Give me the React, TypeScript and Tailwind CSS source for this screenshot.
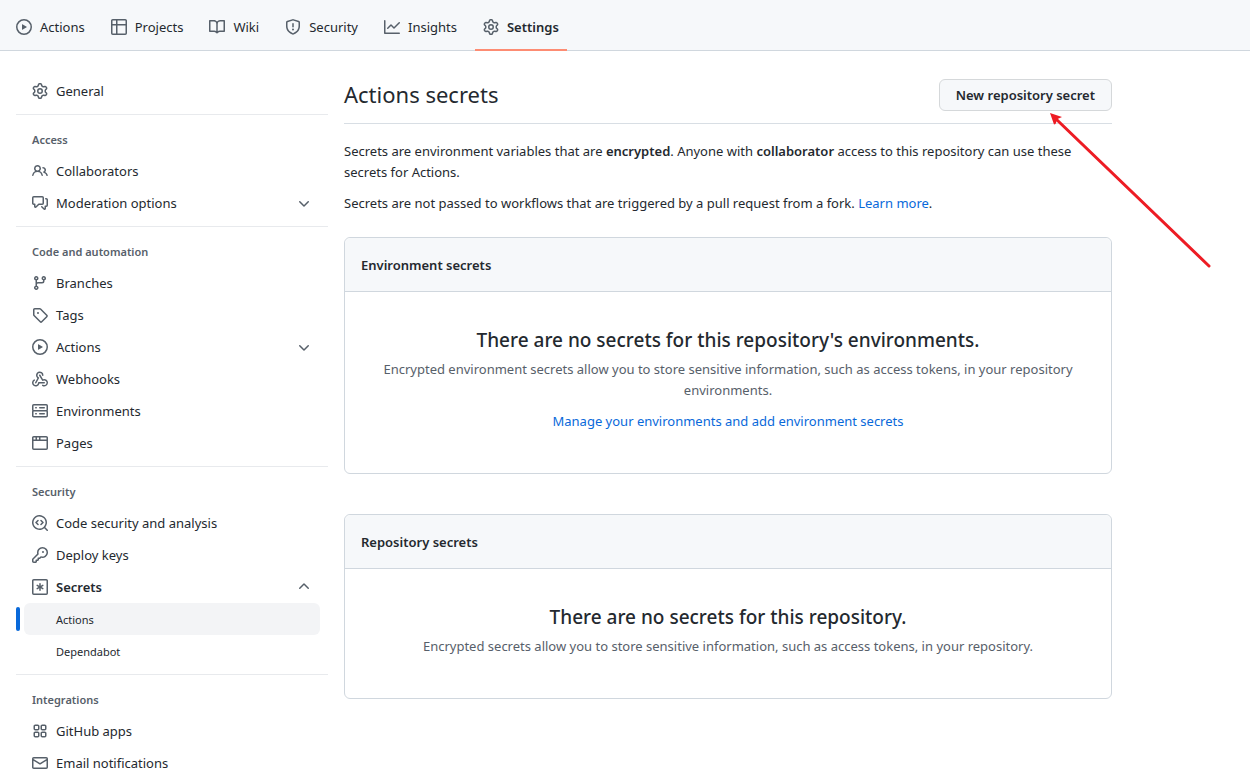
import React from "react";
import clsx from "clsx";

const icons = {
  play: "M1.5 8a6.5 6.5 0 1113 0 6.5 6.5 0 01-13 0zM8 0a8 8 0 100 16A8 8 0 008 0zM6.379 5.227A.25.25 0 006 5.442v5.117a.25.25 0 00.379.214l4.264-2.559a.25.25 0 000-.428L6.379 5.227z",
  table:
    "M0 1.75C0 .784.784 0 1.75 0h12.5C15.216 0 16 .784 16 1.75v12.5A1.75 1.75 0 0114.25 16H1.75A1.75 1.75 0 010 14.25V1.75zM1.5 6.5v7.75c0 .138.112.25.25.25H5v-8H1.5zM5 5H1.5V1.75a.25.25 0 01.25-.25H5V5zm1.5 1.5v8h7.75a.25.25 0 00.25-.25V6.5h-8zm8-1.5h-8V1.5h7.75a.25.25 0 01.25.25V5z",
  book: "M0 1.75A.75.75 0 01.75 1h4.253c1.227 0 2.317.59 3 1.501A3.744 3.744 0 0111.006 1h4.245a.75.75 0 01.75.75v10.5a.75.75 0 01-.75.75h-4.507a2.25 2.25 0 00-1.591.659l-.622.621a.75.75 0 01-1.06 0l-.622-.621A2.25 2.25 0 005.258 13H.75a.75.75 0 01-.75-.75V1.75zm8.755 3a2.25 2.25 0 012.25-2.25H14.5v9h-3.757c-.71 0-1.4.201-1.992.572l.004-7.322zm-1.504 7.324l.004-5.073-.002-2.253A2.25 2.25 0 005.003 2.5H1.5v9h3.757a3.75 3.75 0 011.994.574z",
  shield:
    "M7.467.133a1.75 1.75 0 011.066 0l5.25 1.68A1.75 1.75 0 0115 3.48V7c0 1.566-.32 3.182-1.303 4.682-.983 1.498-2.585 2.813-5.032 3.855a1.7 1.7 0 01-1.33 0c-2.447-1.042-4.049-2.357-5.032-3.855C1.32 10.182 1 8.566 1 7V3.48a1.75 1.75 0 011.217-1.667l5.25-1.68zm.61 1.429a.25.25 0 00-.153 0l-5.25 1.68a.25.25 0 00-.174.238V7c0 1.358.275 2.666 1.057 3.86.784 1.194 2.121 2.34 4.366 3.297a.2.2 0 00.154 0c2.245-.956 3.582-2.104 4.366-3.298C13.225 9.666 13.5 8.36 13.5 7V3.48a.25.25 0 00-.174-.237l-5.25-1.68zM9 10.5a1 1 0 11-2 0 1 1 0 012 0zM8.75 4.75a.75.75 0 00-1.5 0v3a.75.75 0 001.5 0v-3z",
  graph:
    "M1.5 1.75a.75.75 0 00-1.5 0v12.5c0 .414.336.75.75.75h14.5a.75.75 0 000-1.5H1.5V1.75zm14.28 2.53a.75.75 0 00-1.06-1.06L10 7.94 7.53 5.47a.75.75 0 00-1.06 0L3.22 8.72a.75.75 0 001.06 1.06L7 7.06l2.47 2.47a.75.75 0 001.06 0l5.25-5.25z",
  gear: "M7.429 1.525a6.593 6.593 0 011.142 0c.036.003.108.036.137.146l.289 1.105c.147.56.55.967.997 1.189.174.086.341.183.501.29.417.278.97.423 1.53.27l1.102-.303c.11-.03.175.016.195.046.219.31.41.641.573.989.014.031.022.11-.059.19l-.815.806c-.411.406-.562.957-.53 1.456a4.588 4.588 0 010 .582c-.032.499.119 1.05.53 1.456l.815.806c.08.08.073.159.059.19a6.494 6.494 0 01-.573.99c-.02.029-.086.074-.195.045l-1.103-.303c-.559-.153-1.112-.008-1.529.27-.16.107-.327.204-.5.29-.449.222-.851.628-.998 1.189l-.289 1.105c-.029.11-.101.143-.137.146a6.613 6.613 0 01-1.142 0c-.036-.003-.108-.037-.137-.146l-.289-1.105c-.147-.56-.55-.967-.997-1.189a4.502 4.502 0 01-.501-.29c-.417-.278-.97-.423-1.53-.27l-1.102.303c-.11.03-.175-.016-.195-.046a6.492 6.492 0 01-.573-.989c-.014-.031-.022-.11.059-.19l.815-.806c.411-.406.562-.957.53-1.456a4.587 4.587 0 010-.582c.032-.499-.119-1.05-.53-1.456l-.815-.806c-.08-.08-.073-.159-.059-.19a6.44 6.44 0 01.573-.99c.02-.029.086-.075.195-.045l1.103.303c.559.153 1.112.008 1.529-.27.16-.107.327-.204.5-.29.449-.222.851-.628.998-1.189l.289-1.105c.029-.11.101-.143.137-.146zM8 0c-.236 0-.47.01-.701.03-.743.065-1.29.615-1.458 1.261l-.29 1.106c-.017.066-.078.158-.211.224a5.994 5.994 0 00-.668.386c-.123.082-.233.09-.3.071L3.27 2.776c-.644-.177-1.392.02-1.82.63a7.977 7.977 0 00-.704 1.217c-.315.675-.111 1.422.363 1.891l.815.806c.05.048.098.147.088.294a6.084 6.084 0 000 .772c.01.147-.038.246-.088.294l-.815.806c-.474.469-.678 1.216-.363 1.891.2.428.436.835.704 1.218.428.609 1.176.806 1.82.63l1.103-.303c.066-.019.176-.011.299.071.213.143.436.272.668.386.133.066.194.158.212.224l.289 1.106c.169.646.715 1.196 1.458 1.26a8.094 8.094 0 001.402 0c.743-.064 1.29-.614 1.458-1.26l.29-1.106c.017-.066.078-.158.211-.224a5.98 5.98 0 00.668-.386c.123-.082.233-.09.3-.071l1.102.302c.644.177 1.392-.02 1.82-.63.268-.382.505-.789.704-1.217.315-.675.111-1.422-.364-1.891l-.814-.806c-.05-.048-.098-.147-.088-.294a6.1 6.1 0 000-.772c-.01-.147.039-.246.088-.294l.814-.806c.475-.469.679-1.216.364-1.891a7.992 7.992 0 00-.704-1.218c-.428-.609-1.176-.806-1.82-.63l-1.103.303c-.066.019-.176.011-.299-.071a5.991 5.991 0 00-.668-.386c-.133-.066-.194-.158-.212-.224L10.16 1.29C9.99.645 9.444.095 8.701.031A8.094 8.094 0 008 0zm1.5 8a1.5 1.5 0 11-3 0 1.5 1.5 0 013 0zM11 8a3 3 0 11-6 0 3 3 0 016 0z",
  people:
    "M5.5 3.5a2 2 0 100 4 2 2 0 000-4zM2 5.5a3.5 3.5 0 115.898 2.549 5.507 5.507 0 013.034 4.084.75.75 0 11-1.482.235 4.001 4.001 0 00-7.9 0 .75.75 0 01-1.482-.236A5.507 5.507 0 013.102 8.05 3.49 3.49 0 012 5.5zM11 4a.75.75 0 100 1.5 1.5 1.5 0 01.666 2.844.75.75 0 00-.416.672v.352a.75.75 0 00.574.73c1.2.289 2.162 1.2 2.522 2.372a.75.75 0 101.434-.44 5.01 5.01 0 00-2.56-3.012A3 3 0 0011 4z",
  discussion:
    "M1.5 2.75a.25.25 0 01.25-.25h8.5a.25.25 0 01.25.25v5.5a.25.25 0 01-.25.25h-3.5a.75.75 0 00-.53.22L3.5 11.44V9.25a.75.75 0 00-.75-.75h-1a.25.25 0 01-.25-.25v-5.5zM1.75 1A1.75 1.75 0 000 2.75v5.5C0 9.216.784 10 1.75 10H2v1.543a1.457 1.457 0 002.487 1.03L7.061 10h3.189A1.75 1.75 0 0012 8.25v-5.5A1.75 1.75 0 0010.25 1h-8.5zM14.5 4.75a.25.25 0 00-.25-.25h-.5a.75.75 0 110-1.5h.5c.966 0 1.75.784 1.75 1.75v5.5A1.75 1.75 0 0114.25 12H14v1.543a1.457 1.457 0 01-2.487 1.03L9.22 12.28a.75.75 0 111.06-1.06l2.22 2.22v-2.19a.75.75 0 01.75-.75h1a.25.25 0 00.25-.25v-5.5z",
  branch:
    "M11.75 2.5a.75.75 0 100 1.5.75.75 0 000-1.5zm-2.25.75a2.25 2.25 0 113 2.122V6A2.5 2.5 0 0110 8.5H6a1 1 0 00-1 1v1.128a2.251 2.251 0 11-1.5 0V5.372a2.25 2.25 0 111.5 0v1.836A2.492 2.492 0 016 7h4a1 1 0 001-1v-.628A2.25 2.25 0 019.5 3.25zM4.25 12a.75.75 0 100 1.5.75.75 0 000-1.5zM3.5 3.25a.75.75 0 111.5 0 .75.75 0 01-1.5 0z",
  tag: "M2.5 7.775V2.75a.25.25 0 01.25-.25h5.025a.25.25 0 01.177.073l6.25 6.25a.25.25 0 010 .354l-5.025 5.025a.25.25 0 01-.354 0l-6.25-6.25a.25.25 0 01-.073-.177zm-1.5 0V2.75C1 1.784 1.784 1 2.75 1h5.025c.464 0 .91.184 1.238.513l6.25 6.25a1.75 1.75 0 010 2.474l-5.026 5.026a1.75 1.75 0 01-2.474 0l-6.25-6.25A1.75 1.75 0 011 7.775zM6 5a1 1 0 100 2 1 1 0 000-2z",
  webhook:
    "M5.5 4.25a2.25 2.25 0 014.5 0 .75.75 0 001.5 0 3.75 3.75 0 10-6.14 2.889l-2.272 4.258a.75.75 0 001.324.706L7 7.25a.75.75 0 00-.309-1.015A2.25 2.25 0 015.5 4.25zM7.364 3.607a.75.75 0 011.03.257l2.608 4.349a3.75 3.75 0 11-.628 6.785.75.75 0 01.752-1.299 2.25 2.25 0 10-.033-3.88.75.75 0 01-1.03-.256L7.107 4.636a.75.75 0 01.257-1.03zM2.9 8.776A.75.75 0 012.625 9.8 2.25 2.25 0 106 11.75a.75.75 0 01.75-.751h5.5a.75.75 0 010 1.5H7.425a3.751 3.751 0 11-5.55-3.998.75.75 0 011.024.274z",
  server:
    "M1.75 1A1.75 1.75 0 000 2.75v4c0 .372.116.717.314 1a1.742 1.742 0 00-.314 1v4c0 .966.784 1.75 1.75 1.75h12.5A1.75 1.75 0 0016 12.75v-4c0-.372-.116-.717-.314-1 .198-.283.314-.628.314-1v-4A1.75 1.75 0 0014.25 1H1.75zm0 7.5a.25.25 0 00-.25.25v4c0 .138.112.25.25.25h12.5a.25.25 0 00.25-.25v-4a.25.25 0 00-.25-.25H1.75zM1.5 2.75a.25.25 0 01.25-.25h12.5a.25.25 0 01.25.25v4a.25.25 0 01-.25.25H1.75a.25.25 0 01-.25-.25v-4zm5.5 2A.75.75 0 017.75 4h4.5a.75.75 0 010 1.5h-4.5A.75.75 0 017 4.75zM7.75 10a.75.75 0 000 1.5h4.5a.75.75 0 000-1.5h-4.5zM3 4.75A.75.75 0 013.75 4h.5a.75.75 0 010 1.5h-.5A.75.75 0 013 4.75zM3.75 10a.75.75 0 000 1.5h.5a.75.75 0 000-1.5h-.5z",
  browser:
    "M0 2.75C0 1.784.784 1 1.75 1h12.5c.966 0 1.75.784 1.75 1.75v10.5A1.75 1.75 0 0114.25 15H1.75A1.75 1.75 0 010 13.25V2.75zm1.75-.25a.25.25 0 00-.25.25V4.5h2v-2H1.75zM5 2.5v2h2v-2H5zm3.5 0v2h6V2.75a.25.25 0 00-.25-.25H8.5zm6 3.5h-13v7.25c0 .138.112.25.25.25h12.5a.25.25 0 00.25-.25V6z",
  codescan:
    "M8.47 4.97a.75.75 0 000 1.06L9.94 7.5 8.47 8.97a.75.75 0 101.06 1.06l2-2a.75.75 0 000-1.06l-2-2a.75.75 0 00-1.06 0zM6.53 6.03a.75.75 0 00-1.06-1.06l-2 2a.75.75 0 000 1.06l2 2a.75.75 0 101.06-1.06L5.06 7.5l1.47-1.47zM12.246 13.307a7.5 7.5 0 111.06-1.06l2.474 2.473a.75.75 0 11-1.06 1.06l-2.474-2.473zM1.5 7.5a6 6 0 1110.386 4.094.75.75 0 00-.292.293A6 6 0 011.5 7.5z",
  key: "M6.5 5.5a4 4 0 112.731 3.795.75.75 0 00-.768.18L7.44 10.5H6.25a.75.75 0 00-.75.75v1.19l-.06.06H4.25a.75.75 0 00-.75.75v1.19l-.06.06H1.75a.25.25 0 01-.25-.25v-1.69l5.024-5.023a.75.75 0 00.181-.768A3.995 3.995 0 016.5 5.5zm4-5.5a5.5 5.5 0 00-5.348 6.788L.22 11.72a.75.75 0 00-.22.53v2C0 15.216.784 16 1.75 16h2a.75.75 0 00.53-.22l.5-.5a.75.75 0 00.22-.53V14h.75a.75.75 0 00.53-.22l.5-.5a.75.75 0 00.22-.53V12h.75a.75.75 0 00.53-.22l.932-.932A5.5 5.5 0 1010.5 0zm.5 6a1 1 0 100-2 1 1 0 000 2z",
  asterisk:
    "M0 1.75C0 .784.784 0 1.75 0h12.5C15.216 0 16 .784 16 1.75v12.5A1.75 1.75 0 0114.25 16H1.75A1.75 1.75 0 010 14.25V1.75zm1.75-.25a.25.25 0 00-.25.25v12.5c0 .138.112.25.25.25h12.5a.25.25 0 00.25-.25V1.75a.25.25 0 00-.25-.25H1.75zM8 4a.75.75 0 01.75.75V6.7l1.69-.975a.75.75 0 01.75 1.3L9.5 8l1.69.976a.75.75 0 01-.75 1.298L8.75 9.3v1.951a.75.75 0 01-1.5 0V9.299l-1.69.975a.75.75 0 01-.75-1.298L6.5 8l-1.69-.975a.75.75 0 01.75-1.3l1.69.976V4.75A.75.75 0 018 4z",
  apps: "M1.5 3.25c0-.966.784-1.75 1.75-1.75h2.5c.966 0 1.75.784 1.75 1.75v2.5A1.75 1.75 0 015.75 7.5h-2.5A1.75 1.75 0 011.5 5.75v-2.5zM3.25 3a.25.25 0 00-.25.25v2.5c0 .138.112.25.25.25h2.5A.25.25 0 006 5.75v-2.5A.25.25 0 005.75 3h-2.5zM1.5 10.25c0-.966.784-1.75 1.75-1.75h2.5c.966 0 1.75.784 1.75 1.75v2.5a1.75 1.75 0 01-1.75 1.75h-2.5a1.75 1.75 0 01-1.75-1.75v-2.5zM3.25 10a.25.25 0 00-.25.25v2.5c0 .138.112.25.25.25h2.5a.25.25 0 00.25-.25v-2.5a.25.25 0 00-.25-.25h-2.5zM8.5 3.25c0-.966.784-1.75 1.75-1.75h2.5c.966 0 1.75.784 1.75 1.75v2.5a1.75 1.75 0 01-1.75 1.75h-2.5A1.75 1.75 0 018.5 5.75v-2.5zM10.25 3a.25.25 0 00-.25.25v2.5c0 .138.112.25.25.25h2.5a.25.25 0 00.25-.25v-2.5a.25.25 0 00-.25-.25h-2.5zM8.5 10.25c0-.966.784-1.75 1.75-1.75h2.5c.966 0 1.75.784 1.75 1.75v2.5a1.75 1.75 0 01-1.75 1.75h-2.5a1.75 1.75 0 01-1.75-1.75v-2.5zM10.25 10a.25.25 0 00-.25.25v2.5c0 .138.112.25.25.25h2.5a.25.25 0 00.25-.25v-2.5a.25.25 0 00-.25-.25h-2.5z",
  mail: "M1.75 2A1.75 1.75 0 000 3.75v8.5C0 13.216.784 14 1.75 14h12.5A1.75 1.75 0 0016 12.25v-8.5A1.75 1.75 0 0014.25 2H1.75zM14.5 4.07v-.32a.25.25 0 00-.25-.25H1.75a.25.25 0 00-.25.25v.32L8 7.88l6.5-3.81zm-13 1.74v6.441c0 .138.112.25.25.25h12.5a.25.25 0 00.25-.25V5.809L8.38 9.397a.75.75 0 01-.76 0L1.5 5.809z",
  down: "M12.78 6.22a.75.75 0 010 1.06l-4.25 4.25a.75.75 0 01-1.06 0L3.22 7.28a.75.75 0 011.06-1.06L8 9.94l3.72-3.72a.75.75 0 011.06 0z",
  up: "M3.22 9.78a.75.75 0 010-1.06l4.25-4.25a.75.75 0 011.06 0l4.25 4.25a.75.75 0 01-1.06 1.06L8 6.06 4.28 9.78a.75.75 0 01-1.06 0z",
};

type IconName = keyof typeof icons;

const Icon = ({ name }: { name: IconName }) => (
  <svg
    viewBox="0 0 16 16"
    className="h-4 w-4 shrink-0 fill-[#57606a]"
    aria-hidden="true"
  >
    <path fillRule="evenodd" clipRule="evenodd" d={icons[name]} />
  </svg>
);

const tabs: { icon: IconName; label: string; active?: boolean }[] = [
  { icon: "play", label: "Actions" },
  { icon: "table", label: "Projects" },
  { icon: "book", label: "Wiki" },
  { icon: "shield", label: "Security" },
  { icon: "graph", label: "Insights" },
  { icon: "gear", label: "Settings", active: true },
];

type Item = {
  icon: IconName;
  label: string;
  expandable?: boolean;
  children?: { label: string; active?: boolean }[];
};

const sections: { title?: string; items: Item[] }[] = [
  { items: [{ icon: "gear", label: "General" }] },
  {
    title: "Access",
    items: [
      { icon: "people", label: "Collaborators" },
      { icon: "discussion", label: "Moderation options", expandable: true },
    ],
  },
  {
    title: "Code and automation",
    items: [
      { icon: "branch", label: "Branches" },
      { icon: "tag", label: "Tags" },
      { icon: "play", label: "Actions", expandable: true },
      { icon: "webhook", label: "Webhooks" },
      { icon: "server", label: "Environments" },
      { icon: "browser", label: "Pages" },
    ],
  },
  {
    title: "Security",
    items: [
      { icon: "codescan", label: "Code security and analysis" },
      { icon: "key", label: "Deploy keys" },
      {
        icon: "asterisk",
        label: "Secrets",
        children: [{ label: "Actions", active: true }, { label: "Dependabot" }],
      },
    ],
  },
  {
    title: "Integrations",
    items: [
      { icon: "apps", label: "GitHub apps" },
      { icon: "mail", label: "Email notifications" },
    ],
  },
];

const SidebarItem = ({ item }: { item: Item }) => {
  const rowClass = "flex h-8 w-full items-center gap-2 px-4 text-left";

  if (!item.expandable && !item.children) {
    return (
      <li>
        <a href="#" className={rowClass}>
          <Icon name={item.icon} />
          {item.label}
        </a>
      </li>
    );
  }

  return (
    <li>
      <button
        type="button"
        aria-expanded={!!item.children}
        className={clsx(rowClass, item.children && "font-semibold")}
      >
        <Icon name={item.icon} />
        <span className="flex-1">{item.label}</span>
        <Icon name={item.children ? "up" : "down"} />
      </button>
      {item.children && (
        <ul className="text-[11px]">
          {item.children.map((child) => (
            <li key={child.label} className="relative px-2">
              {child.active && (
                <span className="absolute top-1 left-0 h-6 w-1 rounded-md bg-[#0969da]" />
              )}
              <a
                href="#"
                className={clsx(
                  "flex h-8 items-center rounded-md pl-8",
                  child.active && "bg-[#f3f4f6]"
                )}
              >
                {child.label}
              </a>
            </li>
          ))}
        </ul>
      )}
    </li>
  );
};

const SecretsBox = ({
  title,
  heading,
  children,
}: {
  title: string;
  heading: string;
  children: React.ReactNode;
}) => (
  <section className="mb-10 rounded-md border border-[#d0d7de]">
    <h3 className="rounded-t-md border-b border-[#d0d7de] bg-[#f6f8fa] px-4 pt-[17px] pb-[15px] font-semibold">
      {title}
    </h3>
    <div className="px-8 pt-8 pb-[41px] text-center text-[#57606a]">
      <h4 className="mb-[3px] text-[19px] leading-8 font-medium text-[#24292f]">
        {heading}
      </h4>
      {children}
    </div>
  </section>
);

const App = () => {
  return (
    <div className="min-h-screen bg-white font-['Noto_Sans','Open_Sans',sans-serif] text-[13px] leading-[21px] text-[#24292f]">
      <nav className="flex h-[51px] gap-[10px] border-b border-[#d0d7de] bg-[#f6f8fa] px-2">
        {tabs.map((tab) => (
          <a
            key={tab.label}
            href="#"
            className={clsx(
              "-mb-px flex items-center gap-2 border-b-2 px-2 pt-[5px]",
              tab.active ? "border-[#fd8c73] font-semibold" : "border-transparent"
            )}
          >
            <Icon name={tab.icon} />
            {tab.label}
          </a>
        ))}
      </nav>

      <div className="flex max-w-[1128px] gap-4 px-4">
        <aside className="w-[312px] shrink-0 pt-6">
          {sections.map((section, i) => (
            <div
              key={i}
              className="border-b border-[#e8eaed] pb-[7px] last:border-b-0"
            >
              {section.title && (
                <h3 className="px-4 pt-[15px] pb-[5px] text-[11px] leading-5 font-semibold text-[#57606a]">
                  {section.title}
                </h3>
              )}
              <ul>
                {section.items.map((item) => (
                  <SidebarItem key={item.label} item={item} />
                ))}
              </ul>
            </div>
          ))}
        </aside>

        <main className="min-w-0 flex-1 pt-7">
          <header className="mb-[17px] flex items-start justify-between border-b border-[#d8dee4] pb-3">
            <h2 className="text-[22px] leading-[30px]">Actions secrets</h2>
            <div className="relative">
              <button
                type="button"
                className="block h-8 rounded-md border border-[#d5d8da] bg-[#f6f8fa] px-4 font-semibold"
              >
                New repository secret
              </button>
              {/* arrow pointing at the button */}
              <svg
                viewBox="0 0 164 158"
                className="pointer-events-none absolute top-full -right-[100px] h-[158px] w-[164px]"
                aria-hidden="true"
              >
                <path
                  d="M8 8L161 155"
                  stroke="#ed1c24"
                  strokeWidth="3"
                  strokeLinecap="round"
                />
                <path d="M2 2L14 6L9.500 8L7.500 13L6 13.500Z" fill="#ed1c24" />
              </svg>
            </div>
          </header>

          <p className="mb-[10px]">
            Secrets are environment variables that are{" "}
            <strong className="font-semibold">encrypted</strong>. Anyone with{" "}
            <strong className="font-semibold">collaborator</strong> access to
            this repository can use these secrets for Actions.
          </p>
          <p className="mb-[23px]">
            Secrets are not passed to workflows that are triggered by a pull
            request from a fork.{" "}
            <a href="#" className="text-[#0969da]">
              Learn more
            </a>
            .
          </p>

          <SecretsBox
            title="Environment secrets"
            heading="There are no secrets for this repository's environments."
          >
            <p className="mb-[10px]">
              Encrypted environment secrets allow you to store sensitive
              information, such as access tokens, in your repository
              environments.
            </p>
            <p>
              <a href="#" className="text-[#0969da]">
                Manage your environments and add environment secrets
              </a>
            </p>
          </SecretsBox>

          <SecretsBox
            title="Repository secrets"
            heading="There are no secrets for this repository."
          >
            <p>
              Encrypted secrets allow you to store sensitive information, such
              as access tokens, in your repository.
            </p>
          </SecretsBox>
        </main>
      </div>
    </div>
  );
};

export default App;
